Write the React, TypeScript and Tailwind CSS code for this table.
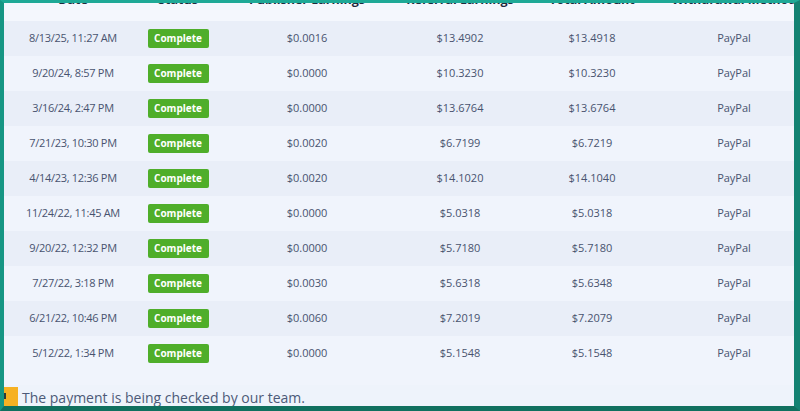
const rows = [
  ['8/13/25, 11:27 AM', '$0.0016', '$13.4902', '$13.4918'],
  ['9/20/24, 8:57 PM', '$0.0000', '$10.3230', '$10.3230'],
  ['3/16/24, 2:47 PM', '$0.0000', '$13.6764', '$13.6764'],
  ['7/21/23, 10:30 PM', '$0.0020', '$6.7199', '$6.7219'],
  ['4/14/23, 12:36 PM', '$0.0020', '$14.1020', '$14.1040'],
  ['11/24/22, 11:45 AM', '$0.0000', '$5.0318', '$5.0318'],
  ['9/20/22, 12:32 PM', '$0.0000', '$5.7180', '$5.7180'],
  ['7/27/22, 3:18 PM', '$0.0030', '$5.6318', '$5.6348'],
  ['6/21/22, 10:46 PM', '$0.0060', '$7.2019', '$7.2079'],
  ['5/12/22, 1:34 PM', '$0.0000', '$5.1548', '$5.1548'],
];

const cols = 'grid grid-cols-[138px_72px_186px_120px_144px_140px] items-center text-center';

export default function App() {
  return (
    <div
      className="w-[800px] h-[411px] bg-[#eef3fb] border-t-[3px] border-l-4 border-r-[6px] border-b-[5px] border-t-[#1ea996] border-l-[#169684] border-r-[#138272] border-b-[#10705f] overflow-hidden"
      style={{ fontFamily: '"Open Sans", "Noto Sans", sans-serif' }}
    >
      <div className="w-[800px] -mt-[22px]">
        <div className={`${cols} h-[40px] pb-[1px] bg-[#f4f7fd] text-[12.5px] font-bold text-[#1f2a3d]`}>
          <div>Date</div>
          <div>Status</div>
          <div>Publisher Earnings</div>
          <div>Referral Earnings</div>
          <div>Total Amount</div>
          <div>Withdrawal Method</div>
        </div>
        {rows.map((r, i) => (
          <div
            key={i}
            className={`${cols} h-[35px] text-[11px] text-[#48536f] ${i % 2 === 0 ? 'bg-[#e9eef8]' : 'bg-[#f0f4fc]'}`}
          >
            <div className="tracking-[-0.3px]">{r[0]}</div>
            <div className="flex justify-center">
              <span className="flex h-[19px] w-[61px] items-center justify-center rounded-[2px] bg-[#4fae2a] text-[10px] font-bold text-white">
                Complete
              </span>
            </div>
            <div>{r[1]}</div>
            <div>{r[2]}</div>
            <div>{r[3]}</div>
            <div>PayPal</div>
          </div>
        ))}
        <div className="h-[14px] bg-[#f0f4fc]" />
        <div className="flex items-center h-[24px] bg-[#eef3fb]">
          <div className="relative h-[21px] w-[14px] bg-[#f6b123]">
            <span className="absolute left-[-1px] top-[6px] h-[6px] w-[3px] bg-[#2c3a3a]" />
          </div>
          <span className="ml-[4px] text-[14px] text-[#4c5a78]">The payment is being checked by our team.</span>
        </div>
      </div>
    </div>
  );
}
